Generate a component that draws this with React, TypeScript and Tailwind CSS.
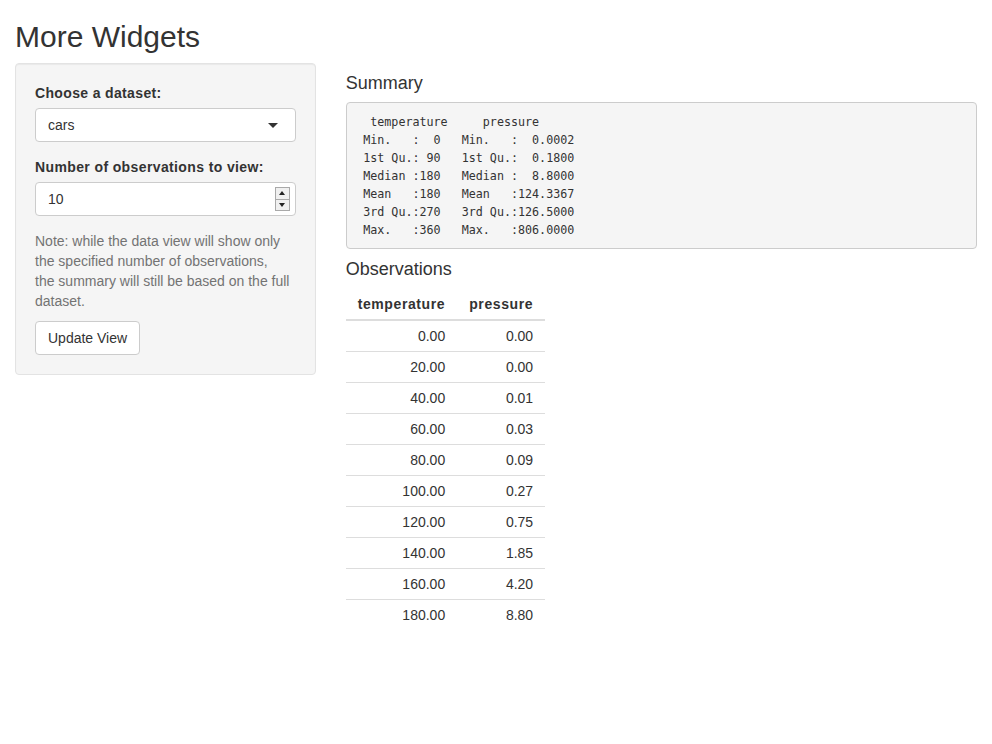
import React from "react";

const summary = [
  "  temperature     pressure       ",
  " Min.   :  0   Min.   :  0.0002  ",
  " 1st Qu.: 90   1st Qu.:  0.1800  ",
  " Median :180   Median :  8.8000  ",
  " Mean   :180   Mean   :124.3367  ",
  " 3rd Qu.:270   3rd Qu.:126.5000  ",
  " Max.   :360   Max.   :806.0000  ",
];

const rows: [string, string][] = [
  ["0.00", "0.00"],
  ["20.00", "0.00"],
  ["40.00", "0.01"],
  ["60.00", "0.03"],
  ["80.00", "0.09"],
  ["100.00", "0.27"],
  ["120.00", "0.75"],
  ["140.00", "1.85"],
  ["160.00", "4.20"],
  ["180.00", "8.80"],
];

export default function App() {
  return (
    <div
      className="min-h-[744px] bg-white px-[15px] text-[14px] leading-[20px] text-[#333]"
      style={{ fontFamily: '"Liberation Sans", Arial, sans-serif' }}
    >
      <h2 className="mt-[20px] mb-[10px] text-[30px] leading-[33px] font-medium">More Widgets</h2>
      <div className="-mx-[15px] flex">
        <div className="w-1/3 px-[15px]">
          <div className="rounded-[4px] border border-[#e3e3e3] bg-[#f5f5f5] p-[19px] shadow-[inset_0_1px_1px_rgba(0,0,0,0.05)]">
            <div className="mb-[15px]">
              <label className="mb-[5px] block font-bold tracking-[0.35px]">Choose a dataset:</label>
              <div className="relative flex h-[34px] items-center rounded-[4px] border border-[#ccc] bg-white px-[12px]">
                <span>cars</span>
                <span className="absolute right-[17px] top-[14px] h-0 w-0 border-x-[5px] border-t-[5px] border-x-transparent border-t-[#333]" />
              </div>
            </div>
            <div className="mb-[15px]">
              <label className="mb-[5px] block font-bold tracking-[0.38px]">Number of observations to view:</label>
              <div className="relative flex h-[34px] items-center rounded-[4px] border border-[#ccc] bg-white px-[12px]">
                <span>10</span>
                <div className="absolute right-[5px] top-[4px] flex h-[24px] w-[15px] flex-col border border-[#a9a9a9] bg-[#f0f0f0]">
                  <div className="flex flex-1 items-center justify-center border-b border-[#a9a9a9]">
                    <span className="h-0 w-0 border-x-[3px] border-b-[4px] border-x-transparent border-b-[#222]" />
                  </div>
                  <div className="flex flex-1 items-center justify-center">
                    <span className="h-0 w-0 border-x-[3px] border-t-[4px] border-x-transparent border-t-[#222]" />
                  </div>
                </div>
              </div>
            </div>
            <p className="mb-[10px] text-[#737373]">
              Note: while the data view will show only
              <br />
              the specified number of observations,
              <br />
              the summary will still be based on the full
              <br />
              dataset.
            </p>
            <button className="h-[34px] rounded-[4px] border border-[#ccc] bg-white px-[12px] text-[#333]">
              Update View
            </button>
          </div>
        </div>
        <div className="w-2/3 px-[15px]">
          <h4 className="mt-[10px] mb-[9px] text-[18px] leading-[20px] font-medium">Summary</h4>
          <pre
            className="mb-[10px] rounded-[4px] border border-[#ccc] bg-[#f5f5f5] px-[9.5px] pt-[10px] pb-[9px] text-[11.7px] leading-[18px] text-[#333]"
            style={{ fontFamily: '"DejaVu Sans Mono", "Liberation Mono", monospace' }}
          >
            {summary.join("\n")}
          </pre>
          <h4 className="mt-[10px] mb-[10px] text-[18px] leading-[20px] font-medium">Observations</h4>
          <table className="border-collapse">
            <thead>
              <tr className="border-b-2 border-[#ddd]">
                <th className="px-[12px] py-[5px] text-right font-bold tracking-[0.6px]">temperature</th>
                <th className="px-[12px] py-[5px] text-right font-bold tracking-[0.6px]">pressure</th>
              </tr>
            </thead>
            <tbody>
              {rows.map((r, i) => (
                <tr key={i} className={i === 0 ? "" : "border-t border-[#ddd]"}>
                  <td className="px-[12px] py-[5px] text-right">{r[0]}</td>
                  <td className="px-[12px] py-[5px] text-right">{r[1]}</td>
                </tr>
              ))}
            </tbody>
          </table>
        </div>
      </div>
    </div>
  );
}
